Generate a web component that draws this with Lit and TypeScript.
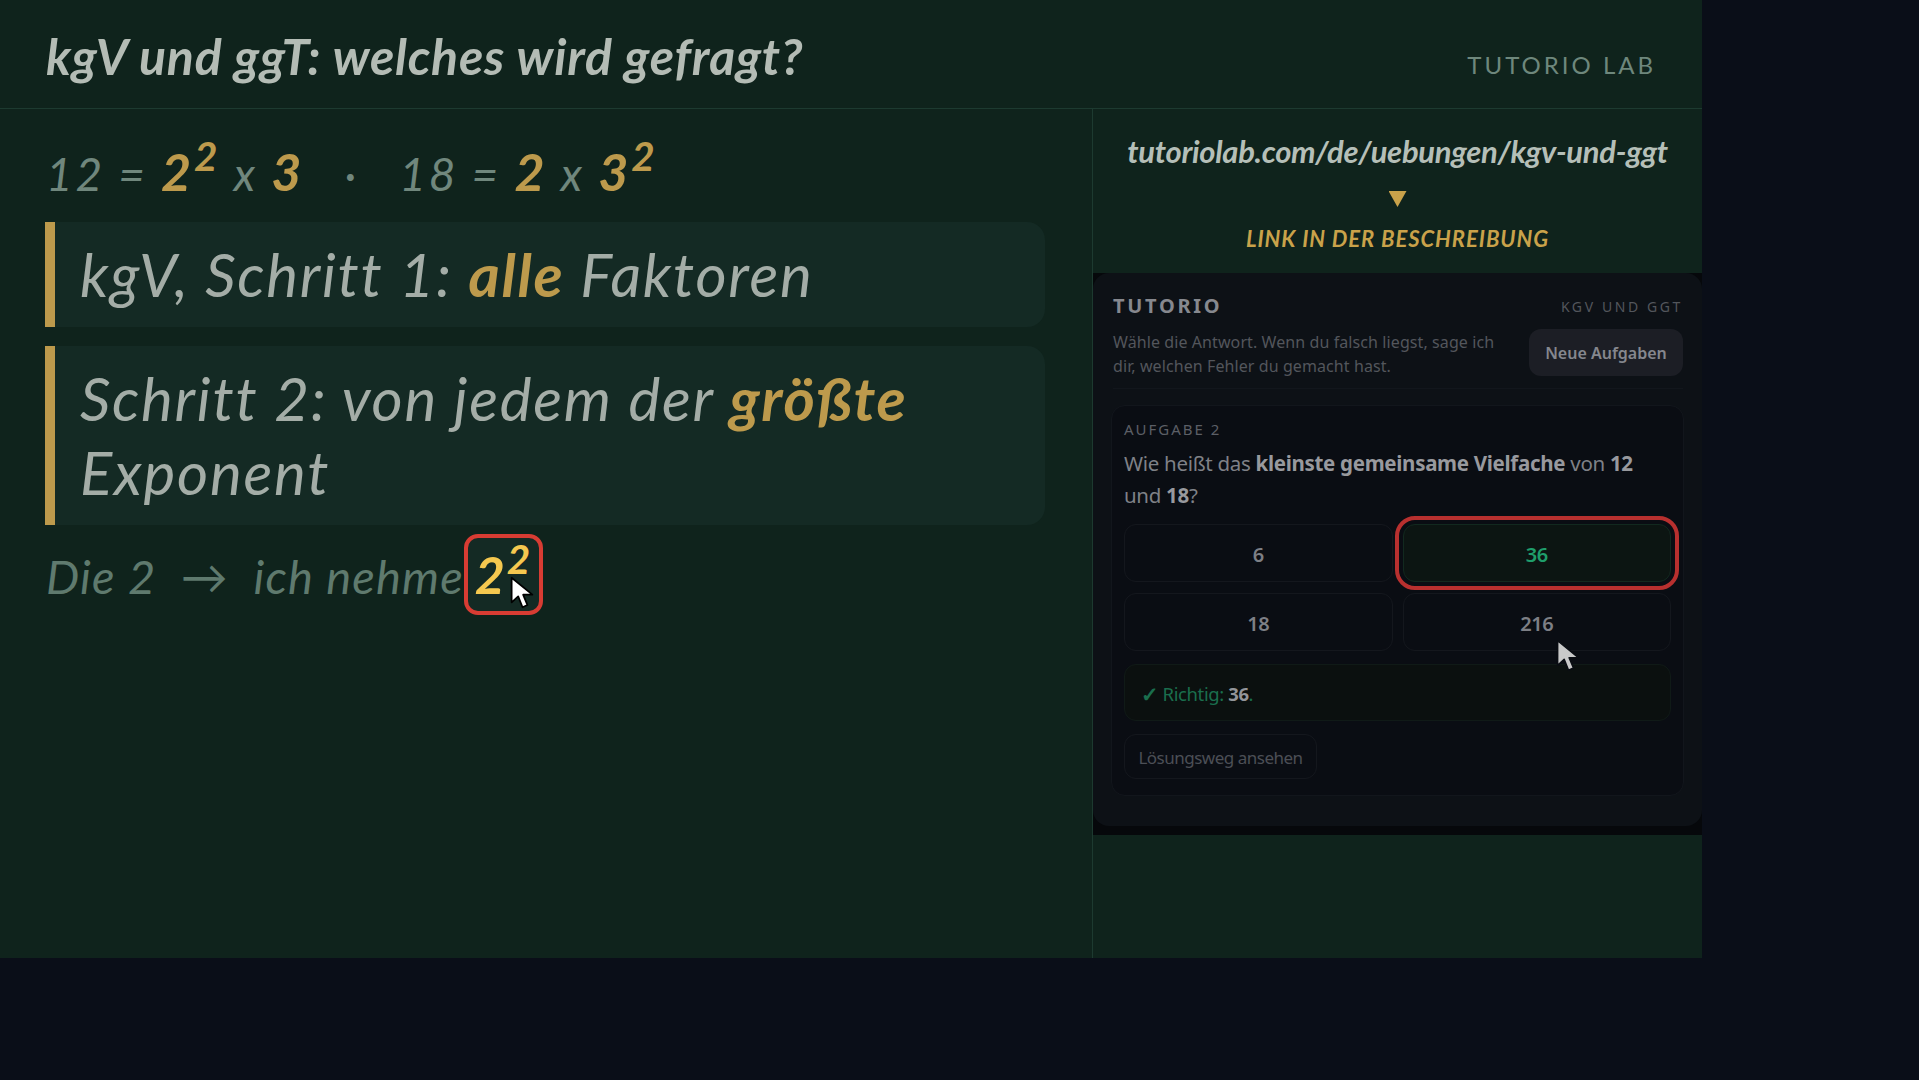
import { LitElement, html, css } from "lit";
import { customElement } from "lit/decorators.js";

const OPTIONS = [
  { label: "6", correct: false },
  { label: "36", correct: true },
  { label: "18", correct: false },
  { label: "216", correct: false },
];

@customElement("app-root")
export class AppRoot extends LitElement {
  static styles = css`
    :host { display: block; width: 1919px; height: 1080px; background: #0a0e18; overflow: hidden; }
    * { box-sizing: border-box; }
    .stage { width: 1702px; height: 958px; background: #0f231c; display: flex; flex-direction: column; }
    .hand { font-family: "Lato", "Noto Sans", sans-serif; font-style: italic; }
    header { height: 109px; border-bottom: 1px solid #1d3a30; display: flex; justify-content: space-between; align-items: flex-start; padding: 0 46px; flex: none; }
    h1 { margin: 26px 0 0; font-size: 50px; line-height: 60px; font-weight: 700; color: #b4bcb5; letter-spacing: 0.75px; white-space: nowrap; }
    .brand { margin-top: 50px; font-size: 24px; line-height: 30px; color: #6e877c; letter-spacing: 3px; font-style: normal; font-weight: 400; }
    .body { flex: 1; display: flex; min-height: 0; }
    .left { width: 1093px; flex: none; border-right: 1px solid #1d3a30; padding: 35px 47px 0 45px; display: flex; flex-direction: column; }
    .eq { height: 78px; margin-left: 1px; font-size: 46px; line-height: 60px; letter-spacing: 2.7px; color: #70877d; white-space: pre; }
    .eq b { color: #bd9a4c; font-weight: 700; font-size: 52px; line-height: 0; }
    sup { font-size: 0.78em; line-height: 0; vertical-align: 0.5em; }
    .box { background: #142a24; border-left: 10px solid #bd9a4c; border-radius: 0 18px 18px 0; padding: 15px 25px 16px; font-size: 60px; line-height: 74px; letter-spacing: 1.75px; color: #a4ada7; margin-bottom: 19px; }
    .box em { color: #bd9a4c; font-weight: 700; }
    .line { margin-top: -10px; margin-left: 1px; display: flex; align-items: center; height: 81px; font-size: 47px; letter-spacing: 1.2px; color: #5f7a6e; white-space: pre; }
    .line-text { padding-top: 2px; }
    .chip { position: relative; width: 79px; height: 81px; border: 4px solid #d83c33; border-radius: 14px; background: #142a24; color: #f5c84f; font-weight: 700; font-size: 52px; line-height: 73px; text-align: center; letter-spacing: 2px; }
    .chip svg { position: absolute; left: 42px; top: 38px; }
    .right { flex: 1; display: flex; flex-direction: column; min-width: 0; }
    .promo { height: 164px; flex: none; display: flex; flex-direction: column; align-items: center; padding-top: 22px; }
    .url { font-size: 31px; line-height: 40px; font-weight: 700; letter-spacing: -0.3px; color: #b5bfb8; white-space: nowrap; }
    .tri { margin-top: 20px; width: 18px; height: 16px; background: #c9a24a; clip-path: polygon(0 0, 100% 0, 50% 100%); flex: none; }
    .cta { margin-top: 18px; font-size: 22px; line-height: 28px; font-weight: 700; color: #c9a24a; letter-spacing: 0.95px; white-space: nowrap; }
    .frame { height: 562px; flex: none; background: #06080b; }
    .card { position: relative; height: 553px; background: #0d1116; border-radius: 16px; padding: 20px 20px 0; font-family: "Noto Sans", sans-serif; }
    .top { display: flex; justify-content: space-between; align-items: center; height: 24px; }
    .logo { font-size: 20px; font-weight: 700; color: #86888e; letter-spacing: 2.7px; }
    .tag { font-size: 14px; color: #53565c; letter-spacing: 2.6px; padding-top: 3px; margin-right: -1px; }
    .sub { display: flex; justify-content: space-between; align-items: flex-start; margin-top: 13px; padding-bottom: 11px; border-bottom: 1px solid #12161c; height: 59px; margin-right: -1px; }
    .sub p { margin: 0; width: 390px; font-size: 16px; line-height: 24px; color: #53565c; letter-spacing: 0.09px; }
    .new { margin-top: -1px; width: 154px; height: 47px; border-radius: 12px; background: #1c1e25; color: #85878e; font: 600 16px "Noto Sans", sans-serif; letter-spacing: 0; border: 0; padding: 0; }
    .panel { margin: 16px -2px 0 -2px; height: 391px; background: #0a0d13; border: 1px solid #12161c; border-radius: 14px; padding: 13px 12px 0; }
    .kicker { font-size: 15px; line-height: 20px; color: #5c5f66; letter-spacing: 2px; }
    .q { margin: 8px 0 0; max-width: 540px; font-size: 20.5px; line-height: 32px; color: #7f8187; letter-spacing: -0.3px; }
    .q b { color: #98999e; font-weight: 700; }
    .grid { margin-top: 13px; display: grid; grid-template-columns: 1fr 1fr; gap: 11px 10px; }
    .opt { height: 58px; background: transparent; border: 1px solid #14171d; border-radius: 12px; color: #7d7f85; font: 600 20px "Noto Sans", sans-serif; letter-spacing: -0.4px; padding: 2px 0 0; }
    .opt.ok { color: #1f9e6b; background: #0c1512; border-color: #12291f; outline: 4px solid #b8302f; outline-offset: 4px; }
    .fb { margin-top: 13px; height: 57px; background: #0b100f; border: 1px solid #101a17; border-radius: 12px; display: flex; align-items: center; padding: 2px 16px 0; font-size: 18.5px; color: #1a6e4d; letter-spacing: -0.4px; white-space: pre; }
    .fb b { color: #93959a; font-weight: 700; }
    .fb i { font-style: normal; font-weight: 700; font-size: 21px; margin-right: 4px; }
    .how { display: block; margin-top: 13px; width: 193px; height: 45px; background: transparent; border: 1px solid #14171d; border-radius: 12px; color: #4c4f56; font: 400 17px "Noto Sans", sans-serif; letter-spacing: -0.5px; padding: 2px 0 0; white-space: nowrap; }
    .cursor2 { position: absolute; left: 463px; top: 366px; pointer-events: none; }
  `;

  render() {
    return html`
      <div class="stage">
        <header class="hand">
          <h1>kgV und ggT: welches wird gefragt?</h1>
          <div class="brand">TUTORIO LAB</div>
        </header>
        <div class="body">
          <section class="left hand">
            <div class="eq">12 = <b>2<sup>2</sup></b> x <b>3</b>   ·   18 = <b>2</b> x <b>3<sup>2</sup></b></div>
            <div class="box">kgV, Schritt 1: <em>alle</em> Faktoren</div>
            <div class="box">Schritt 2: von jedem der <em>größte</em> Exponent</div>
            <div class="line"><span class="line-text">Die 2  →  ich nehme</span><span class="chip">2<sup>2</sup>
              <svg width="24" height="33" viewBox="0 0 22 30"><path d="M1.5 1.5V24l6-5.5 4 10 4.5-2-4-9.5h8.5z" fill="#fff" stroke="#000" stroke-width="1.6" stroke-linejoin="round"/></svg>
            </span></div>
          </section>
          <section class="right">
            <div class="promo hand">
              <div class="url">tutoriolab.com/de/uebungen/kgv-und-ggt</div>
              <div class="tri"></div>
              <div class="cta">LINK IN DER BESCHREIBUNG</div>
            </div>
            <div class="frame">
              <div class="card">
                <div class="top"><span class="logo">TUTORIO</span><span class="tag">KGV UND GGT</span></div>
                <div class="sub">
                  <p>Wähle die Antwort. Wenn du falsch liegst, sage ich dir, welchen Fehler du gemacht hast.</p>
                  <button class="new">Neue Aufgaben</button>
                </div>
                <div class="panel">
                  <div class="kicker">AUFGABE 2</div>
                  <p class="q">Wie heißt das <b>kleinste gemeinsame Vielfache</b> von <b>12</b> und <b>18</b>?</p>
                  <div class="grid">
                    ${OPTIONS.map((o) => html`<button class="opt ${o.correct ? "ok" : ""}">${o.label}</button>`)}
                  </div>
                  <div class="fb"><i>✓</i>Richtig: <b>36</b>.</div>
                  <button class="how">Lösungsweg ansehen</button>
                </div>
                <svg class="cursor2" width="24" height="33" viewBox="0 0 22 30"><path d="M1.5 1.5V24l6-5.5 4 10 4.5-2-4-9.5h8.5z" fill="#c9c9c9" stroke="#0a0d13" stroke-width="1.4" stroke-linejoin="round"/></svg>
              </div>
            </div>
          </section>
        </div>
      </div>
    `;
  }
}
